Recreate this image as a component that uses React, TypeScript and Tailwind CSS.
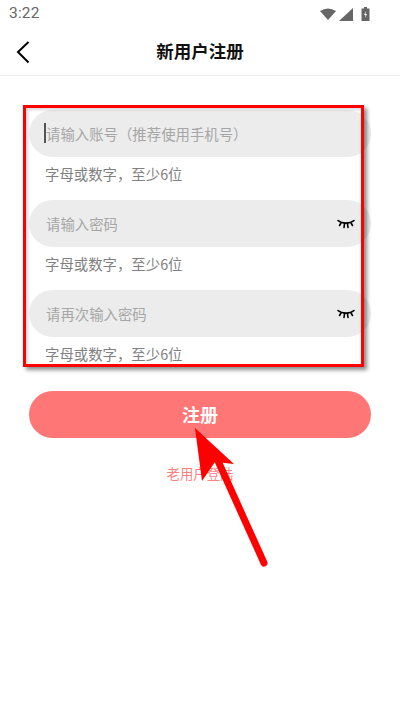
import React from "react";

const font = { fontFamily: '"Noto Sans CJK SC", "Liberation Sans", sans-serif' };

function Eye() {
  return (
    <svg width="18" height="10" viewBox="0 0 18 10" fill="none" stroke="#000" strokeWidth="1.6" strokeLinecap="round">
      <path d="M1 1.5 C5 5 13 5 17 1.5" />
      <path d="M4 4 L2.5 6.5" />
      <path d="M7.5 4.8 L7 8.5" />
      <path d="M10.5 4.8 L11 8.5" />
      <path d="M14 4 L15.5 6.5" />
    </svg>
  );
}

function Field({ placeholder, eye, caret }: { placeholder: string; eye?: boolean; caret?: boolean }) {
  return (
    <div>
      <div className="h-[47px] rounded-full bg-[#ececec] flex items-center justify-between pl-[17px] pr-[16px]">
        <div className="flex items-center relative">
          {caret && <div className="absolute left-[-2px] top-[0px] w-[2px] h-[20px] bg-[#555]" />}
          <span className="text-[14.4px] leading-[22px] text-[#a6a6a6]">{placeholder}</span>
        </div>
        {eye && <Eye />}
      </div>
      <div className="pl-[16px] mt-[6px] text-[14.4px] leading-[22px] text-[#808080]">字母或数字，至少6位</div>
    </div>
  );
}

export default function App() {
  return (
    <div className="relative w-[400px] h-[711px] bg-white overflow-hidden" style={font}>
      <div className="h-[28px] flex items-center justify-between pl-[9px] pr-[30px]">
        <span className="text-[15.5px] text-[#666] tracking-[0.2px]" style={{ fontFamily: "Roboto, sans-serif" }}>3:22</span>
        <div className="flex items-center gap-[3px]">
          <svg width="16" height="12" viewBox="0 0 16 12"><path d="M0 3 Q8 -2 16 3 L8 12 Z" fill="#666" /></svg>
          <svg width="14" height="13" viewBox="0 0 14 13"><path d="M14 0 V13 H0 Z" fill="#666" /></svg>
          <svg width="9" height="14" viewBox="0 0 9 14" className="ml-[5px]">
            <path d="M3 0 H6 V1.5 H8.5 V14 H0.5 V1.5 H3 Z" fill="#666" />
            <path d="M5 4 L3 8 H4.5 L4 11 L6 7 H4.5 Z" fill="#fff" />
          </svg>
        </div>
      </div>
      <div className="relative h-[48px] border-b border-[#f0f0f0] flex items-center justify-center">
        <svg className="absolute left-[15px] top-[12px]" width="16" height="24" viewBox="0 0 16 24" fill="none" stroke="#000" strokeWidth="2">
          <path d="M13.5 2 L3 12 L13.5 22.5" />
        </svg>
        <span className="text-[17.5px] font-bold text-[#111]">新用户注册</span>
      </div>

      <div className="px-[29px] pt-[34px] flex flex-col gap-[15px]">
        <Field placeholder="请输入账号（推荐使用手机号）" caret />
        <Field placeholder="请输入密码" eye />
        <Field placeholder="请再次输入密码" eye />
      </div>

      <div className="mx-[29px] mt-[26px] h-[47px] rounded-full bg-[#ff7676] flex items-center justify-center text-[18px] font-bold text-white">
        注册
      </div>
      <div className="mt-[24px] text-center text-[13.4px] leading-[22px] text-[#ff7f7f]">老用户登陆</div>

      <div className="absolute left-[23px] top-[105px] w-[341px] h-[262px] border-[3px] border-[#ff0000] shadow-[3px_3px_4px_rgba(0,0,0,0.45),inset_2px_2px_3px_rgba(0,0,0,0.15)]" />
      <svg className="absolute left-0 top-0" width="400" height="711" viewBox="0 0 400 711">
        <path d="M264 563 L214 452" stroke="#ff0000" strokeWidth="7" strokeLinecap="round" />
        <path d="M195 428 L234 464 L215 462 L202 481 Z" fill="#ff0000" />
      </svg>
    </div>
  );
}
